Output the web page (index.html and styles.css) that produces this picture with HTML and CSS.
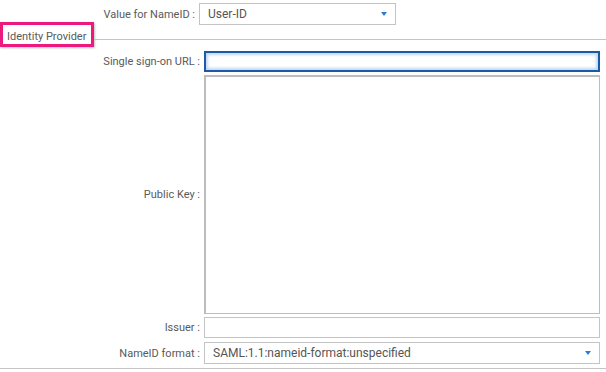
FILE: index.html
```html
<!DOCTYPE html>
<html lang="en">
<head>
    <meta charset="UTF-8">
    <title>SAML Settings</title>
    <link rel="stylesheet" href="styles.css">
</head>
<body>
    <div class="top-row">
        <label class="label">Value for NameID :</label>
        <div class="select select-short">
            <span>User-ID</span>
            <span class="arrow"></span>
        </div>
    </div>

    <div class="legend-row">
        <div class="legend">Identity Provider</div>
        <div class="legend-line"></div>
    </div>

    <div class="form">
        <label class="label">Single sign-on URL :</label>
        <input type="text" class="field field-focus">

        <label class="label label-middle">Public Key :</label>
        <textarea class="field field-area"></textarea>

        <label class="label">Issuer :</label>
        <input type="text" class="field">

        <label class="label label-format">NameID format :</label>
        <div class="select select-long">
            <span>SAML:1.1:nameid-format:unspecified</span>
            <span class="arrow"></span>
        </div>
    </div>

    <div class="bottom-line"></div>
</body>
</html>
```

FILE: styles.css
```css
body {
    margin: 0;
    padding: 0;
    background: #fff;
    font-family: Roboto, "Liberation Sans", sans-serif;
    color: #555;
}

.label {
    font-size: 11px;
    color: #5a5a5a;
    text-align: right;
    display: flex;
    align-items: center;
    justify-content: flex-end;
    white-space: nowrap;
}

.top-row {
    display: grid;
    grid-template-columns: 195px 197px;
    column-gap: 4px;
    padding-top: 3px;
}

.select {
    box-sizing: border-box;
    height: 22px;
    border: 1px solid #c4c4c4;
    display: flex;
    align-items: center;
    justify-content: space-between;
    padding: 0 8px 0 8px;
    font-size: 12px;
    color: #555;
}

.select-long {
    margin-top: 1px;
}

.arrow {
    width: 0;
    height: 0;
    border-left: 3px solid transparent;
    border-right: 3px solid transparent;
    border-top: 4px solid #2b7bd6;
}

.legend-row {
    display: flex;
    margin-top: -3px;
    height: 25px;
}

.legend {
    box-sizing: border-box;
    width: 94px;
    height: 25px;
    border: 3px solid #ec1a7e;
    box-shadow: 1px 1px 2px rgba(0, 0, 0, 0.25);
    font-size: 11px;
    color: #5a5a5a;
    padding: 5px 0 0 4px;
    white-space: nowrap;
}

.legend-line {
    flex: 1;
    margin-top: 17px;
    border-top: 1px solid #c4c4c4;
    height: 0;
}

.form {
    display: grid;
    grid-template-columns: 200px 396px;
    column-gap: 4px;
    row-gap: 3px;
    margin-top: 4px;
}

.field {
    box-sizing: border-box;
    margin: 0;
    height: 21px;
    width: 396px;
    border: 1px solid #c4c4c4;
    background: #fff;
    outline: none;
    font-family: inherit;
    resize: none;
}

.field-focus {
    border: 2px solid #1d5aa6;
    box-shadow: inset 0 0 3px 2px #c2d8f1;
}

.field-area {
    height: 239px;
    border: 1px solid #bdbdbd;
    border-width: 2px 1px 1px 2px;
}

.label-format {
    margin-top: 1px;
}

.bottom-line {
    margin-top: 4px;
    border-top: 1px solid #c4c4c4;
}
```
